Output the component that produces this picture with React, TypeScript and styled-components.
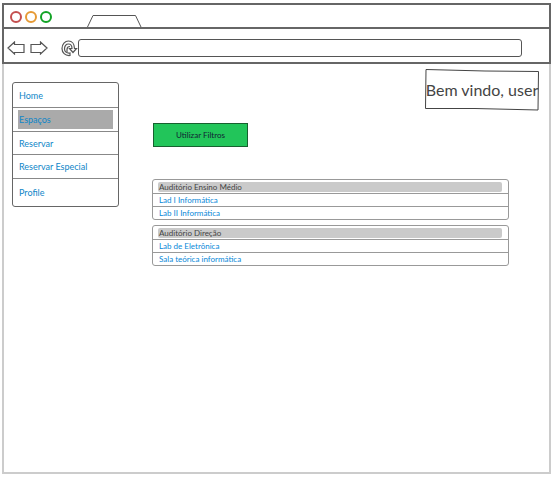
import React from "react";
import styled, { createGlobalStyle } from "styled-components";

const GlobalStyle = createGlobalStyle`
  *, *::before, *::after { box-sizing: border-box; }
  body { margin: 0; background: #fff; font-family: Lato, "Open Sans", sans-serif; }
  ul { list-style: none; margin: 0; padding: 0; }
`;

const Browser = styled.div`
  display: flex;
  flex-direction: column;
  min-height: 100vh;
  padding: 3px 4px 6px 2px;
`;

const Chrome = styled.header`
  border: 2px solid #666;
`;

const TabStrip = styled.div`
  display: flex;
  align-items: flex-end;
  height: 24px;
  padding-left: 6px;
  border-bottom: 2px solid #666;
`;

const WindowButtons = styled.div`
  display: flex;
  gap: 3px;
  align-self: center;
  padding-top: 2px;
  margin-right: 35px;
`;

const WindowButton = styled.button<{ $color: string }>`
  width: 12px;
  height: 12px;
  padding: 0;
  border: 2px solid ${(p) => p.$color};
  border-radius: 50%;
  background: #fff;
`;

const Toolbar = styled.div`
  display: flex;
  align-items: center;
  height: 33px;
  padding: 5px 27px 0 3px;
`;

const ToolButton = styled.button<{ $gap: number }>`
  display: flex;
  padding: 0;
  margin-right: ${(p) => p.$gap}px;
  border: 0;
  background: none;
`;

const AddressInput = styled.input`
  flex: 1;
  min-width: 0;
  height: 18px;
  padding: 0 6px;
  border: 1px solid #555;
  border-radius: 3px;
  background: #fff;
  font: 12px Lato, sans-serif;
`;

const Page = styled.div`
  flex: 1;
  display: grid;
  grid-template-columns: 107px minmax(0, 1fr);
  column-gap: 33px;
  padding: 5px 10px 20px 8px;
  border: 2px solid #ccc;
  border-top: 0;
`;

const Sidebar = styled.nav`
  padding-top: 13px;
`;

const Menu = styled.ul`
  border: 1px solid #666;
  border-radius: 3px;
`;

const MenuItem = styled.li<{ $height: number }>`
  display: flex;
  align-items: center;
  height: ${(p) => p.$height}px;
  padding: 0 5px;
  & + & { border-top: 1px solid #888; }
`;

const MenuLink = styled.a<{ $active?: boolean }>`
  flex: 1;
  padding-left: 1px;
  line-height: 19px;
  font-size: 9px;
  color: #0f86c8;
  text-decoration: none;
  white-space: nowrap;
  background: ${(p) => (p.$active ? "#aaa" : "transparent")};
`;

const Main = styled.main`
  display: flex;
  flex-direction: column;
  align-items: flex-start;
`;

const Sketch = styled.svg`
  position: absolute;
  inset: 0;
  width: 100%;
  height: 100%;
  z-index: -1;
`;

const Welcome = styled.p`
  position: relative;
  z-index: 0;
  align-self: flex-end;
  width: 114px;
  margin: 0;
  text-align: center;
  font-size: 16px;
  line-height: 42px;
  color: #444;
  white-space: nowrap;
`;

const FilterButton = styled.button`
  width: 95px;
  height: 24px;
  margin: 12px 0 32px 1px;
  padding: 0;
  border: 1px solid #17602f;
  background: #22c55a;
  color: #123;
  font: 8px Lato, sans-serif;
`;

const Rooms = styled.div`
  display: flex;
  flex-direction: column;
  gap: 5px;
  align-self: stretch;
  margin-right: 30px;
`;

const RoomGroup = styled.section`
  border: 1px solid #999;
  border-radius: 3px;
`;

const RoomHeading = styled.h2`
  margin: 2px 6px 1px 5px;
  padding-left: 1px;
  border-radius: 2px;
  background: #cacaca;
  color: #444;
  font-size: 8px;
  font-weight: 400;
  line-height: 10px;
`;

const RoomItem = styled.li`
  padding-left: 6px;
  border-top: 1px solid #999;
  font-size: 8px;
  line-height: 12px;
`;

const RoomLink = styled.a`
  color: #0888d8;
  text-decoration: none;
`;

const menu = [
  { label: "Home", height: 24 },
  { label: "Espaços", height: 24, active: true },
  { label: "Reservar", height: 23 },
  { label: "Reservar Especial", height: 24 },
  { label: "Profile", height: 28 },
];

const groups = [
  { title: "Auditório Ensino Médio", rooms: ["Lad I Informática", "Lab II Informática"] },
  { title: "Auditório Direção", rooms: ["Lab de Eletrônica", "Sala teórica informática"] },
];

const ArrowIcon = ({ flip }: { flip?: boolean }) => (
  <svg width="18" height="14" viewBox="0 0 18 14" fill="none" stroke="#555" strokeWidth="1.2">
    <path d={flip ? "M17 7 10.500 1v2.500H1v8h9.500V13Z" : "M1 7 7.500 1v2.500H17v8H7.500V13Z"} />
  </svg>
);

export default function App() {
  return (
    <>
      <GlobalStyle />
      <Browser>
        <Chrome>
          <TabStrip>
            <WindowButtons>
              <WindowButton $color="#c44f4f" aria-label="Fechar" />
              <WindowButton $color="#e69a35" aria-label="Minimizar" />
              <WindowButton $color="#12a325" aria-label="Maximizar" />
            </WindowButtons>
            <svg width="56" height="13" viewBox="0 0 56 13" fill="none" stroke="#555">
              <path d="M.5 13 6 1.500H48.500L54 13" />
            </svg>
          </TabStrip>
          <Toolbar>
            <ToolButton $gap={5} aria-label="Voltar"><ArrowIcon /></ToolButton>
            <ToolButton $gap={13} aria-label="Avançar"><ArrowIcon flip /></ToolButton>
            <ToolButton $gap={0} aria-label="Recarregar">
              <svg width="17" height="17" viewBox="0 0 17 17" fill="none" stroke="#555" strokeWidth="1.2">
                <path d="M9 15.500C4 16 1 12.500 1 8.500C1 4 4 1 7.500 1C11 1 13.500 4 13.500 8.500h2L12 12.500 8.500 8.500H11C11 5.500 9.500 4 7.500 4C5 4 3.500 6 3.500 9C3.500 11.500 5.500 13.500 9 13Z" />
                <path d="M6 12V9.500C6 7.500 7 6.500 9 6.500" />
              </svg>
            </ToolButton>
            <AddressInput aria-label="Endereço" />
          </Toolbar>
        </Chrome>
        <Page>
          <Sidebar>
            <Menu>
              {menu.map((m) => (
                <MenuItem key={m.label} $height={m.height}>
                  <MenuLink href="#" $active={m.active}>{m.label}</MenuLink>
                </MenuItem>
              ))}
            </Menu>
          </Sidebar>
          <Main>
            <Welcome>
              <Sketch viewBox="0 0 114 42" preserveAspectRatio="none" fill="none" stroke="#444">
                <path d="M1 .5 60 2 113.500 2.500 113 41 50 39.500 .5 39.500Z" />
              </Sketch>
              Bem vindo, user
            </Welcome>
            <FilterButton>Utilizar Filtros</FilterButton>
            <Rooms>
              {groups.map((g) => (
                <RoomGroup key={g.title}>
                  <RoomHeading>{g.title}</RoomHeading>
                  <ul>
                    {g.rooms.map((r) => (
                      <RoomItem key={r}><RoomLink href="#">{r}</RoomLink></RoomItem>
                    ))}
                  </ul>
                </RoomGroup>
              ))}
            </Rooms>
          </Main>
        </Page>
      </Browser>
    </>
  );
}
